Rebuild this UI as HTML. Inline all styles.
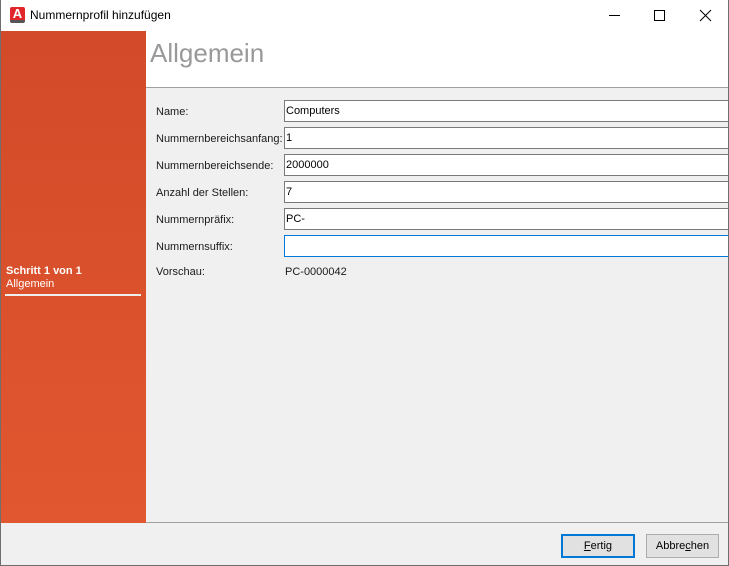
<!DOCTYPE html>
<html><head><style>
*{margin:0;padding:0;box-sizing:border-box}
body{width:729px;height:566px;background:#f0f0f0;font-family:"Liberation Sans",sans-serif;font-size:11px;color:#000;position:relative;overflow:hidden}
.win{position:absolute;left:0;top:0;width:729px;height:566px;border:1px solid #6e6e6e;border-top:none}
.title{position:absolute;left:0;top:0;width:729px;height:31px;background:#fff}
.title .t{position:absolute;left:30px;top:8px;font-size:12px}
.icon{position:absolute;left:10px;top:7px;width:15px;height:16px;background:#e0262b;border-radius:2px;border-bottom:3px solid #555;color:#fff;font-weight:bold;font-size:13px;line-height:13px;text-align:center}
.side{position:absolute;left:1px;top:31px;width:145px;height:492px;background:linear-gradient(#d24a29,#e1572f)}
.hdr{position:absolute;left:146px;top:31px;width:582px;height:57px;background:#fff;border-bottom:1px solid #a0a0a0}
.hdr span{position:absolute;left:4px;top:7px;font-size:26px;color:#999}
.lbl{position:absolute;left:156px;color:#1a1a1a;font-size:11px}
.inp{position:absolute;left:284px;width:450px;height:22px;border:1px solid #7a7a7a;background:#fff;padding:4px 1px;font-size:11px}
.btn{position:absolute;top:534px;height:24px;border:1px solid #adadad;background:#e1e1e1;text-align:center;line-height:22px;font-size:11px}
</style></head><body>
<div class="title"><div class="icon">A</div><div class="t">Nummernprofil hinzufügen</div>
<svg style="position:absolute;left:600px;top:0" width="129" height="31"><line x1="9" y1="15.5" x2="20" y2="15.5" stroke="#000"/><rect x="54.5" y="10.5" width="10" height="10" fill="none" stroke="#000"/><path d="M100 10L111 21M111 10L100 21" stroke="#000"/></svg></div>
<div class="side"><div style="position:absolute;left:5px;top:234px;color:#fff;font-weight:bold;font-size:11px">Schritt 1 von 1</div><div style="position:absolute;left:5px;top:247px;color:#fff;font-size:11px">Allgemein</div><div style="position:absolute;left:4px;top:263px;width:136px;height:2px;background:#eee"></div></div>
<div class="hdr"><span>Allgemein</span></div>
<div class="lbl" style="top:106px">Name:</div><div class="inp" style="top:100px">Computers</div>
<div class="lbl" style="top:133px">Nummernbereichsanfang:</div><div class="inp" style="top:127px">1</div>
<div class="lbl" style="top:160px">Nummernbereichsende:</div><div class="inp" style="top:154px">2000000</div>
<div class="lbl" style="top:187px">Anzahl der Stellen:</div><div class="inp" style="top:181px">7</div>
<div class="lbl" style="top:214px">Nummernpräfix:</div><div class="inp" style="top:208px">PC-</div>
<div class="lbl" style="top:241px">Nummernsuffix:</div><div class="inp" style="top:235px;border-color:#0078d7"></div>
<div class="lbl" style="top:266px">Vorschau:</div><div class="lbl" style="top:266px;left:285px">PC-0000042</div>
<div style="position:absolute;left:146px;top:522px;width:582px;height:1px;background:#a0a0a0"></div>
<div class="btn" style="left:561px;width:74px;border:2px solid #0078d7;line-height:20px"><u>F</u>ertig</div>
<div class="btn" style="left:646px;width:73px">Abbre<u>c</u>hen</div>
<div class="win"></div>
</body></html>
